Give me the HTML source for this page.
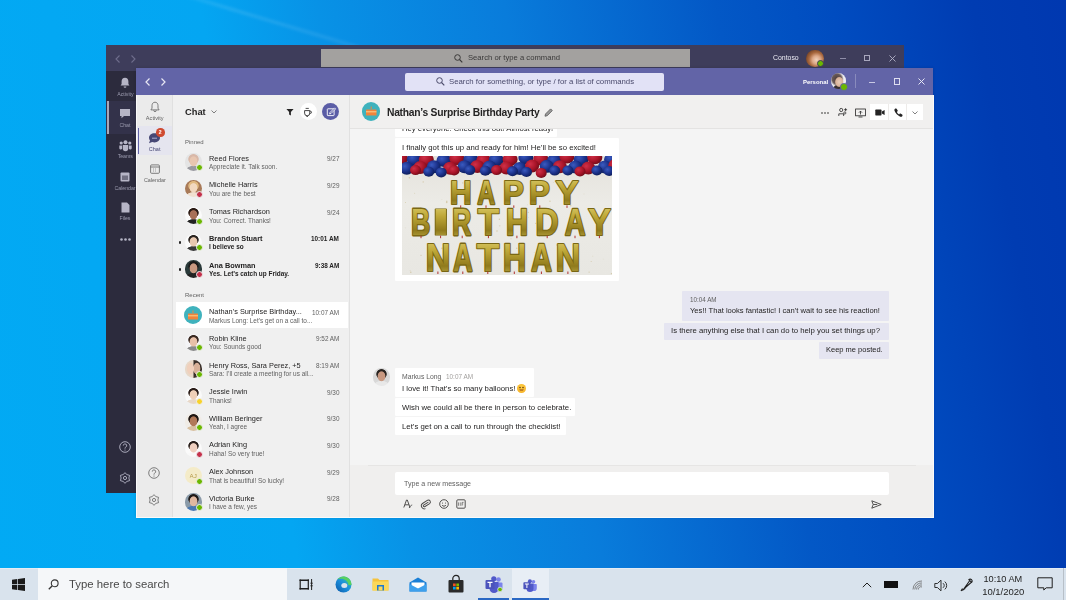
<!DOCTYPE html><html><head><meta charset="utf-8"><style>*{margin:0;padding:0;box-sizing:border-box}
html,body{width:1066px;height:600px;overflow:hidden}
body{position:relative;font-family:"Liberation Sans",sans-serif;background:#0a8de6}
.a{position:absolute}
.t{position:absolute;white-space:nowrap;line-height:1;will-change:transform}
svg{position:absolute;overflow:visible}
.av{position:absolute;border-radius:50%;overflow:hidden}
</style></head><body>
<div class="a" style="left:0.00px;top:0.00px;width:1066.00px;height:600.00px;background:linear-gradient(80deg,#02aaf4 0%,#04a6f2 26%,#0892e6 36%,#097cdb 52%,#0358c6 70%,#004cc0 80%,#003cb2 92%,#0038b0 100%)"></div>
<div class="a" style="left:106px;top:-30px;width:520px;height:3px;transform:rotate(16.7deg);transform-origin:0 0;background:linear-gradient(90deg,rgba(255,255,255,0),rgba(255,255,255,.12) 25%,rgba(255,255,255,.08) 60%,rgba(255,255,255,0));filter:blur(1.5px)"></div>
<div class="a" style="left:106.00px;top:44.50px;width:797.50px;height:448.50px;background:#2c2b3d"></div>
<div class="a" style="left:106.00px;top:44.50px;width:797.50px;height:26.50px;background:#3e3d5b"></div>
<svg style="left:115.00px;top:54.50px" width="6" height="8" viewBox="0 0 6 8"><path d="M4.5 .5 1 4l3.5 3.5" fill="none" stroke="#6f6e8c" stroke-width="1.1"/></svg>
<svg style="left:130.00px;top:54.50px" width="6" height="8" viewBox="0 0 6 8"><path d="M1.5 .5 5 4 1.5 7.5" fill="none" stroke="#6f6e8c" stroke-width="1.1"/></svg>
<div class="a" style="left:321.00px;top:49.00px;width:368.50px;height:17.70px;background:#a3a19f"></div>
<svg style="left:454.00px;top:53.50px" width="9" height="9" viewBox="0 0 9 9"><circle cx="3.5" cy="3.5" r="2.8" fill="none" stroke="#3a3939" stroke-width="1"/><path d="M5.5 5.5 8.3 8.3" stroke="#3a3939" stroke-width="1.1"/></svg>
<div class="t" style="left:468.00px;top:54.35px;font-size:7.66px;color:#3a3939;font-weight:normal;">Search or type a command</div>
<div class="t" style="left:773.20px;top:55.30px;font-size:6.9px;color:#ececf4;font-weight:normal;">Contoso</div>
<div class="av" style="left:806px;top:49.5px;width:17.5px;height:17.5px;background:radial-gradient(circle at 58% 58%,#efd2bc 0,#dca888 28%,#a8683e 52%,#6e3e22 80%,#5a3a2a 100%)"></div>
<div class="a" style="left:817.00px;top:59.50px;width:7.00px;height:7.00px;border-radius:50%;background:#6bb700;border:1px solid #3e3d5b"></div>
<div class="a" style="left:840.00px;top:58.00px;width:6.00px;height:1.00px;background:#8f8ea8"></div>
<div class="a" style="left:864.20px;top:55.00px;width:6.20px;height:6.20px;border:.9px solid #a8a7bd"></div>
<svg style="left:888.60px;top:54.60px" width="7" height="7" viewBox="0 0 7 7"><path d="M.5 .5l6 6M6.5 .5l-6 6" stroke="#b4b3c8" stroke-width=".9"/></svg>
<div class="a" style="left:106.00px;top:100.50px;width:29.50px;height:33.00px;background:#33324a"></div>
<div class="a" style="left:106.50px;top:100.50px;width:2.00px;height:33.00px;background:#a8a8b8"></div>
<svg style="left:120.00px;top:77.00px" width="10" height="11" viewBox="0 0 10 11"><path d="M5 .8C2.8.8 1.6 2.5 1.6 4.6V7L.6 8.6h8.8L8.4 7V4.6C8.4 2.5 7.2.8 5 .8Z" fill="#b6b5c6"/><path d="M3.6 9.4a1.4 1.4 0 0 0 2.8 0" fill="#b6b5c6"/></svg>
<div class="t" style="right:941.00px;top:91.66px;font-size:5.2px;color:#9d9cb0;font-weight:normal;transform:translateX(50%)">Activity</div>
<svg style="left:119.00px;top:107.50px" width="12" height="11" viewBox="0 0 12 11"><path d="M1 1h10v7H5L2.5 10.2V8H1Z" fill="#b6b5c6"/></svg>
<div class="t" style="right:941.00px;top:122.66px;font-size:5.2px;color:#9d9cb0;font-weight:normal;transform:translateX(50%)">Chat</div>
<svg style="left:118.50px;top:139.50px" width="13" height="10" viewBox="0 0 13 10"><circle cx="6.5" cy="2.2" r="2" fill="#b6b5c6"/><circle cx="2.2" cy="3" r="1.6" fill="#b6b5c6"/><circle cx="10.8" cy="3" r="1.6" fill="#b6b5c6"/><path d="M3.8 5h5.4v3.6a2.7 2.7 0 0 1-5.4 0Z" fill="#b6b5c6"/><path d="M.3 5.4h2.8v3.4a1.6 1.6 0 0 1-2.8-.4ZM9.9 5.4h2.8v3a1.6 1.6 0 0 1-2.8.4Z" fill="#b6b5c6"/></svg>
<div class="t" style="right:941.00px;top:153.66px;font-size:5.2px;color:#9d9cb0;font-weight:normal;transform:translateX(50%)">Teams</div>
<svg style="left:120.00px;top:171.50px" width="10" height="10" viewBox="0 0 10 10"><rect x=".5" y=".5" width="9" height="9" rx="1" fill="#b6b5c6"/><rect x="2" y="3.5" width="6" height="4.5" fill="#2c2b3d" opacity=".5"/></svg>
<div class="t" style="right:941.00px;top:185.66px;font-size:5.2px;color:#9d9cb0;font-weight:normal;transform:translateX(50%)">Calendar</div>
<svg style="left:120.50px;top:202.00px" width="9" height="11" viewBox="0 0 9 11"><path d="M.5.5h5.5l2.5 2.5v7.5H.5Z" fill="#b6b5c6"/></svg>
<div class="t" style="right:941.00px;top:216.16px;font-size:5.2px;color:#9d9cb0;font-weight:normal;transform:translateX(50%)">Files</div>
<svg style="left:119.50px;top:237.50px" width="11" height="3" viewBox="0 0 11 3"><circle cx="1.5" cy="1.5" r="1.3" fill="#b6b5c6"/><circle cx="5.5" cy="1.5" r="1.3" fill="#b6b5c6"/><circle cx="9.5" cy="1.5" r="1.3" fill="#b6b5c6"/></svg>
<svg style="left:119.00px;top:440.70px" width="12" height="12" viewBox="0 0 12 12"><circle cx="6" cy="6" r="5.3" fill="none" stroke="#b6b5c6" stroke-width=".9"/><path d="M4.3 4.6a1.7 1.7 0 1 1 2.5 1.5c-.6.3-.8.6-.8 1.2v.4" fill="none" stroke="#b6b5c6" stroke-width=".9"/><circle cx="6" cy="9" r=".6" fill="#b6b5c6"/></svg>
<svg style="left:119.00px;top:472.30px" width="12" height="12" viewBox="0 0 12 12"><path d="M6.00 0.70 L7.95 2.62 L10.59 3.35 L9.90 6.00 L10.59 8.65 L7.95 9.38 L6.00 11.30 L4.05 9.38 L1.41 8.65 L2.10 6.00 L1.41 3.35 L4.05 2.62Z" stroke-linejoin="round" fill="none" stroke="#b6b5c6" stroke-width=".9"/><circle cx="6" cy="6" r="1.6" fill="none" stroke="#b6b5c6" stroke-width=".9"/></svg>
<div class="a" style="left:135.50px;top:68.00px;width:797.50px;height:449.00px;background:#f4f4f4;box-shadow:0 0 3px rgba(0,0,0,.15)"></div>
<div class="a" style="left:135.50px;top:68.00px;width:797.50px;height:27.00px;background:#6264a7"></div>
<svg style="left:144.50px;top:77.70px" width="6" height="8" viewBox="0 0 6 8"><path d="M4.5 .5 1 4l3.5 3.5" fill="none" stroke="#e8e8f4" stroke-width="1.2"/></svg>
<svg style="left:160.00px;top:77.70px" width="6" height="8" viewBox="0 0 6 8"><path d="M1.5 .5 5 4 1.5 7.5" fill="none" stroke="#e8e8f4" stroke-width="1.2"/></svg>
<div class="a" style="left:405.00px;top:73.00px;width:259.20px;height:17.50px;background:#e2e2f6;border-radius:2px"></div>
<svg style="left:435.50px;top:76.80px" width="9" height="9" viewBox="0 0 9 9"><circle cx="3.5" cy="3.5" r="2.8" fill="none" stroke="#4a4a6a" stroke-width="1"/><path d="M5.5 5.5 8.3 8.3" stroke="#4a4a6a" stroke-width="1.1"/></svg>
<div class="t" style="left:449.00px;top:77.99px;font-size:7.8px;color:#4a4a6c;font-weight:normal;">Search for something, or type / for a list of commands</div>
<div class="t" style="left:802.60px;top:79.82px;font-size:5.95px;color:#ffffff;font-weight:bold;">Personal</div>
<div class="av" style="left:830.8px;top:73.4px;width:15.5px;height:15.5px;background:radial-gradient(ellipse 30% 34% at 55% 56%,#e8cbb8 0,#d8b098 80%,transparent 100%),radial-gradient(ellipse 45% 45% at 40% 38%,#4a3a38 0,#6a5a58 70%,transparent 100%),radial-gradient(ellipse 40% 30% at 50% 100%,#3a3030 0,#3a3030 80%,transparent 100%),#eeeef2"></div>
<div class="a" style="left:840.00px;top:83.00px;width:7.50px;height:7.50px;border-radius:50%;background:#6bb700;border:1px solid #6264a7"></div>
<div class="a" style="left:855.00px;top:74.00px;width:1.00px;height:14.00px;background:rgba(255,255,255,.25)"></div>
<div class="a" style="left:869.00px;top:81.60px;width:6.00px;height:0.90px;background:#c8c8e4"></div>
<div class="a" style="left:893.50px;top:78.30px;width:6.50px;height:6.50px;border:.9px solid #dedef0"></div>
<svg style="left:917.60px;top:78.00px" width="7" height="7" viewBox="0 0 7 7"><path d="M.5 .5l6 6M6.5 .5l-6 6" stroke="#ececf8" stroke-width=".95"/></svg>
<div class="a" style="left:135.50px;top:95.00px;width:37.00px;height:422.00px;background:#ebebeb"></div>
<div class="a" style="left:172.00px;top:95.00px;width:1.00px;height:422.00px;background:#e0e0e0"></div>
<svg style="left:149.70px;top:100.80px" width="10" height="11" viewBox="0 0 10 11"><path d="M5 1.2C3 1.2 2 2.8 2 4.6V7.2L.9 8.9h8.2L8 7.2V4.6C8 2.8 7 1.2 5 1.2Z" fill="none" stroke="#616161" stroke-width=".8"/><path d="M3.7 9.3a1.3 1.3 0 0 0 2.6 0" fill="none" stroke="#616161" stroke-width=".8"/></svg>
<div class="t" style="right:911.30px;top:115.68px;font-size:5.6px;color:#616161;font-weight:normal;transform:translateX(50%)">Activity</div>
<div class="a" style="left:136.00px;top:126.00px;width:36.00px;height:28.50px;background:#e5e5ef"></div>
<div class="a" style="left:137.80px;top:128.20px;width:1.50px;height:26.00px;background:#6264a7"></div>
<svg style="left:148.00px;top:132.00px" width="13" height="12" viewBox="0 0 13 12"><path d="M6.5 1.2c3.2 0 5.5 2 5.5 4.6S9.7 10.4 6.5 10.4c-.8 0-1.6-.1-2.3-.4L1 11.2l1-2.6C1.4 7.8 1 6.9 1 5.8 1 3.2 3.3 1.2 6.5 1.2Z" fill="#464775"/><path d="M4 6.2h5" stroke="#c8c8e8" stroke-width=".8"/></svg>
<div class="a" style="left:156.30px;top:128.00px;width:8.50px;height:8.50px;border-radius:50%;background:#cf4a30"></div>
<div class="t" style="right:905.45px;top:129.68px;font-size:5.6px;color:#fff;font-weight:bold;transform:translateX(50%)">2</div>
<div class="t" style="right:911.80px;top:146.53px;font-size:5.5px;color:#464775;font-weight:normal;transform:translateX(50%)">Chat</div>
<svg style="left:149.50px;top:163.50px" width="10" height="10" viewBox="0 0 10 10"><rect x=".6" y=".9" width="8.8" height="8.4" rx="1" fill="none" stroke="#616161" stroke-width=".8"/><path d="M.6 3h8.8" stroke="#616161" stroke-width=".8"/><path d="M3 5h.8M5 5h.8M3 7h.8M5 7h.8" stroke="#616161" stroke-width=".7"/></svg>
<div class="t" style="right:911.50px;top:178.07px;font-size:5.4px;color:#616161;font-weight:normal;transform:translateX(50%)">Calendar</div>
<svg style="left:148.20px;top:467.30px" width="12" height="12" viewBox="0 0 12 12"><circle cx="6" cy="6" r="5.3" fill="none" stroke="#616161" stroke-width=".8"/><path d="M4.3 4.6a1.7 1.7 0 1 1 2.5 1.5c-.6.3-.8.6-.8 1.2v.4" fill="none" stroke="#616161" stroke-width=".8"/><circle cx="6" cy="9" r=".55" fill="#616161"/></svg>
<svg style="left:148.20px;top:494.00px" width="12" height="12" viewBox="0 0 12 12"><path d="M6.00 0.70 L7.95 2.62 L10.59 3.35 L9.90 6.00 L10.59 8.65 L7.95 9.38 L6.00 11.30 L4.05 9.38 L1.41 8.65 L2.10 6.00 L1.41 3.35 L4.05 2.62Z" stroke-linejoin="round" fill="none" stroke="#616161" stroke-width=".8"/><circle cx="6" cy="6" r="1.6" fill="none" stroke="#616161" stroke-width=".8"/></svg>
<div class="a" style="left:173.00px;top:95.00px;width:176.00px;height:422.00px;background:#f0f0f0"></div>
<div class="a" style="left:348.50px;top:95.00px;width:1.00px;height:422.00px;background:#e1e1e1"></div>
<div class="t" style="left:184.70px;top:108.22px;font-size:9.3px;color:#252424;font-weight:bold;">Chat</div>
<svg style="left:210.50px;top:109.80px" width="6" height="4" viewBox="0 0 6 4"><path d="M.5.5 3 3 5.5.5" fill="none" stroke="#616161" stroke-width=".8"/></svg>
<svg style="left:286.30px;top:108.00px" width="8" height="8" viewBox="0 0 8 8"><path d="M.4.9h7.2L4.9 4.1v3.3L3.1 6.5V4.1Z" fill="#252424"/></svg>
<div class="a" style="left:299.80px;top:103.40px;width:17.00px;height:17.00px;border-radius:50%;background:#fff"></div>
<svg style="left:303.30px;top:106.50px" width="10" height="10" viewBox="0 0 10 10"><path d="M1.6 3.6h5.2v2.6a2.6 2.6 0 0 1-5.2 0Z" fill="none" stroke="#252424" stroke-width=".85"/><path d="M6.8 4.2h.6a1.1 1.1 0 0 1 0 2.2h-.8" fill="none" stroke="#252424" stroke-width=".8"/><path d="M2.6 1.4h3.2M3.4 9.4h1.6" stroke="#252424" stroke-width=".8"/></svg>
<div class="a" style="left:321.70px;top:102.80px;width:17.70px;height:17.70px;border-radius:50%;background:#5b5da6"></div>
<svg style="left:325.60px;top:106.60px" width="10" height="10" viewBox="0 0 10 10"><rect x="1.3" y="1.8" width="6.8" height="6.8" rx=".6" fill="none" stroke="#fff" stroke-width=".9"/><path d="M8.6.9 4 5.5 3.6 6.9 5 6.5 9.6 1.9Z" fill="#5b5da6" stroke="#fff" stroke-width=".85" stroke-linejoin="round"/></svg>
<div class="t" style="left:184.70px;top:139.10px;font-size:6px;color:#616161;font-weight:normal;">Pinned</div>
<div class="av" style="left:184.60px;top:153.30px;width:17.40px;height:17.40px;background:radial-gradient(ellipse 25% 30% at 50% 46%,#e8c6b0 0,#e8c6b0 82%,transparent 100%),radial-gradient(ellipse 33% 30% at 50% 34%,#d8b8a8 0,#d8b8a8 85%,transparent 100%),radial-gradient(ellipse 48% 30% at 50% 100%,#9a9aa0 0,#9a9aa0 88%,transparent 100%),#e4e4e4"></div>
<div class="a" style="left:195.50px;top:164.20px;width:7.00px;height:7.00px;border-radius:50%;background:#6bb700;border:1px solid #f0f0f0"></div>
<div class="t" style="left:209.00px;top:154.69px;font-size:7.35px;color:#252424;font-weight:normal;">Reed Flores</div>
<div class="t" style="left:209.00px;top:164.20px;font-size:6.45px;color:#616161;font-weight:normal;">Appreciate it. Talk soon.</div>
<div class="t" style="right:727.00px;top:156.22px;font-size:6.4px;color:#616161;font-weight:normal;">9/27</div>
<div class="av" style="left:184.60px;top:180.05px;width:17.40px;height:17.40px;background:radial-gradient(ellipse 25% 30% at 50% 46%,#f2d8c0 0,#f2d8c0 82%,transparent 100%),radial-gradient(ellipse 33% 30% at 50% 34%,#e0b880 0,#e0b880 85%,transparent 100%),radial-gradient(ellipse 48% 30% at 50% 100%,#f0e0d0 0,#f0e0d0 88%,transparent 100%),#a87a58"></div>
<div class="a" style="left:195.50px;top:190.95px;width:7.00px;height:7.00px;border-radius:50%;background:#c4314b;border:1px solid #f0f0f0"></div>
<div class="t" style="left:209.00px;top:181.44px;font-size:7.35px;color:#252424;font-weight:normal;">Michelle Harris</div>
<div class="t" style="left:209.00px;top:190.95px;font-size:6.45px;color:#616161;font-weight:normal;">You are the best</div>
<div class="t" style="right:727.00px;top:182.97px;font-size:6.4px;color:#616161;font-weight:normal;">9/29</div>
<div class="av" style="left:184.60px;top:206.80px;width:17.40px;height:17.40px;background:radial-gradient(ellipse 25% 30% at 50% 46%,#a87058 0,#a87058 82%,transparent 100%),radial-gradient(ellipse 33% 30% at 50% 34%,#2a1a14 0,#2a1a14 85%,transparent 100%),radial-gradient(ellipse 48% 30% at 50% 100%,#222 0,#222 88%,transparent 100%),#fbfbfb"></div>
<div class="a" style="left:195.50px;top:217.70px;width:7.00px;height:7.00px;border-radius:50%;background:#6bb700;border:1px solid #f0f0f0"></div>
<div class="t" style="left:209.00px;top:208.19px;font-size:7.35px;color:#252424;font-weight:normal;">Tomas Richardson</div>
<div class="t" style="left:209.00px;top:217.70px;font-size:6.45px;color:#616161;font-weight:normal;">You: Correct. Thanks!</div>
<div class="t" style="right:727.00px;top:209.72px;font-size:6.4px;color:#616161;font-weight:normal;">9/24</div>
<div class="av" style="left:184.60px;top:233.55px;width:17.40px;height:17.40px;background:radial-gradient(ellipse 25% 30% at 50% 46%,#e8c8b0 0,#e8c8b0 82%,transparent 100%),radial-gradient(ellipse 33% 30% at 50% 34%,#2a2420 0,#2a2420 85%,transparent 100%),radial-gradient(ellipse 48% 30% at 50% 100%,#3a3a3a 0,#3a3a3a 88%,transparent 100%),#fbfbfb"></div>
<div class="a" style="left:195.50px;top:244.45px;width:7.00px;height:7.00px;border-radius:50%;background:#6bb700;border:1px solid #f0f0f0"></div>
<div class="t" style="left:209.00px;top:234.94px;font-size:7.35px;color:#252424;font-weight:bold;">Brandon Stuart</div>
<div class="t" style="left:209.00px;top:244.45px;font-size:6.45px;color:#252424;font-weight:bold;">I believe so</div>
<div class="t" style="right:727.00px;top:236.47px;font-size:6.4px;color:#252424;font-weight:bold;">10:01 AM</div>
<div class="a" style="left:178.80px;top:241.45px;width:2.60px;height:2.60px;border-radius:50%;background:#252424"></div>
<div class="av" style="left:184.60px;top:260.30px;width:17.40px;height:17.40px;background:radial-gradient(ellipse 25% 30% at 50% 46%,#c89880 0,#c89880 82%,transparent 100%),radial-gradient(ellipse 33% 30% at 50% 34%,#1a1a1a 0,#1a1a1a 85%,transparent 100%),radial-gradient(ellipse 48% 30% at 50% 100%,#222 0,#222 88%,transparent 100%),#2a3a3a"></div>
<div class="a" style="left:195.50px;top:271.20px;width:7.00px;height:7.00px;border-radius:50%;background:#c4314b;border:1px solid #f0f0f0"></div>
<div class="t" style="left:209.00px;top:261.69px;font-size:7.35px;color:#252424;font-weight:bold;">Ana Bowman</div>
<div class="t" style="left:209.00px;top:271.20px;font-size:6.45px;color:#252424;font-weight:bold;">Yes. Let’s catch up Friday.</div>
<div class="t" style="right:727.00px;top:263.22px;font-size:6.4px;color:#252424;font-weight:bold;">9:38 AM</div>
<div class="a" style="left:178.80px;top:268.20px;width:2.60px;height:2.60px;border-radius:50%;background:#252424"></div>
<div class="t" style="left:184.70px;top:291.90px;font-size:6px;color:#616161;font-weight:normal;">Recent</div>
<div class="a" style="left:175.80px;top:302.00px;width:172.00px;height:26.20px;background:#fff"></div>
<div class="av" style="left:184.20px;top:306.00px;width:18.20px;height:18.20px;background:#3fb2bd"></div>
<svg style="left:187.30px;top:310.10px" width="12" height="10" viewBox="0 0 12 10"><rect x="1" y="3.5" width="10" height="6" rx=".6" fill="#f0843c"/><rect x="1" y="5.3" width="10" height="1" fill="#fbd38a"/><path d="M6 .5v2.5" stroke="#f0843c" stroke-width="1"/></svg>
<div class="t" style="left:209.00px;top:308.29px;font-size:7.35px;color:#252424;font-weight:normal;">Nathan’s Surprise Birthday...</div>
<div class="t" style="left:209.00px;top:317.80px;font-size:6.45px;color:#616161;font-weight:normal;">Markus Long: Let’s get on a call to...</div>
<div class="t" style="right:727.00px;top:309.82px;font-size:6.4px;color:#616161;font-weight:normal;">10:07 AM</div>
<div class="av" style="left:184.60px;top:333.53px;width:17.40px;height:17.40px;background:radial-gradient(ellipse 25% 30% at 50% 46%,#e8c0a8 0,#e8c0a8 82%,transparent 100%),radial-gradient(ellipse 33% 30% at 50% 34%,#3a2a22 0,#3a2a22 85%,transparent 100%),radial-gradient(ellipse 48% 30% at 50% 100%,#8a8a8a 0,#8a8a8a 88%,transparent 100%),#f4f4f6"></div>
<div class="a" style="left:195.50px;top:344.43px;width:7.00px;height:7.00px;border-radius:50%;background:#6bb700;border:1px solid #f0f0f0"></div>
<div class="t" style="left:209.00px;top:334.92px;font-size:7.35px;color:#252424;font-weight:normal;">Robin Kline</div>
<div class="t" style="left:209.00px;top:344.43px;font-size:6.45px;color:#616161;font-weight:normal;">You: Sounds good</div>
<div class="t" style="right:727.00px;top:336.45px;font-size:6.4px;color:#616161;font-weight:normal;">9:52 AM</div>
<div class="av" style="left:184.60px;top:360.16px;width:17.40px;height:17.40px;background:radial-gradient(ellipse 22% 35% at 32% 48%,#f0d0bc 0,#f0d0bc 85%,transparent 100%),radial-gradient(ellipse 22% 35% at 70% 48%,#d8b098 0,#d8b098 85%,transparent 100%),linear-gradient(90deg,#e8d8c8 0,#e8d8c8 48%,#3a302a 52%,#3a302a 100%)"></div>
<div class="a" style="left:195.50px;top:371.06px;width:7.00px;height:7.00px;border-radius:50%;background:#6bb700;border:1px solid #f0f0f0"></div>
<div class="t" style="left:209.00px;top:361.55px;font-size:7.35px;color:#252424;font-weight:normal;">Henry Ross, Sara Perez, +5</div>
<div class="t" style="left:209.00px;top:371.06px;font-size:6.45px;color:#616161;font-weight:normal;">Sara: I’ll create a meeting for us all...</div>
<div class="t" style="right:727.00px;top:363.08px;font-size:6.4px;color:#616161;font-weight:normal;">8:19 AM</div>
<div class="av" style="left:184.60px;top:386.79px;width:17.40px;height:17.40px;background:radial-gradient(ellipse 25% 30% at 50% 46%,#f0d0b8 0,#f0d0b8 82%,transparent 100%),radial-gradient(ellipse 33% 30% at 50% 34%,#2a1c18 0,#2a1c18 85%,transparent 100%),radial-gradient(ellipse 48% 30% at 50% 100%,#e8d8c8 0,#e8d8c8 88%,transparent 100%),#fafafa"></div>
<div class="a" style="left:195.50px;top:397.69px;width:7.00px;height:7.00px;border-radius:50%;background:#f8d22a;border:1px solid #f0f0f0"></div>
<div class="t" style="left:209.00px;top:388.18px;font-size:7.35px;color:#252424;font-weight:normal;">Jessie Irwin</div>
<div class="t" style="left:209.00px;top:397.69px;font-size:6.45px;color:#616161;font-weight:normal;">Thanks!</div>
<div class="t" style="right:727.00px;top:389.71px;font-size:6.4px;color:#616161;font-weight:normal;">9/30</div>
<div class="av" style="left:184.60px;top:413.42px;width:17.40px;height:17.40px;background:radial-gradient(ellipse 25% 30% at 50% 46%,#b07858 0,#b07858 82%,transparent 100%),radial-gradient(ellipse 33% 30% at 50% 34%,#1e1612 0,#1e1612 85%,transparent 100%),radial-gradient(ellipse 48% 30% at 50% 100%,#d8c0a0 0,#d8c0a0 88%,transparent 100%),#f0ece6"></div>
<div class="a" style="left:195.50px;top:424.32px;width:7.00px;height:7.00px;border-radius:50%;background:#6bb700;border:1px solid #f0f0f0"></div>
<div class="t" style="left:209.00px;top:414.81px;font-size:7.35px;color:#252424;font-weight:normal;">William Beringer</div>
<div class="t" style="left:209.00px;top:424.32px;font-size:6.45px;color:#616161;font-weight:normal;">Yeah, I agree</div>
<div class="t" style="right:727.00px;top:416.34px;font-size:6.4px;color:#616161;font-weight:normal;">9/30</div>
<div class="av" style="left:184.60px;top:440.05px;width:17.40px;height:17.40px;background:radial-gradient(ellipse 25% 30% at 50% 46%,#f0d0c0 0,#f0d0c0 82%,transparent 100%),radial-gradient(ellipse 33% 30% at 50% 34%,#2a201c 0,#2a201c 85%,transparent 100%),radial-gradient(ellipse 48% 30% at 50% 100%,#f8f8f8 0,#f8f8f8 88%,transparent 100%),#fafafa"></div>
<div class="a" style="left:195.50px;top:450.95px;width:7.00px;height:7.00px;border-radius:50%;background:#c4314b;border:1px solid #f0f0f0"></div>
<div class="t" style="left:209.00px;top:441.44px;font-size:7.35px;color:#252424;font-weight:normal;">Adrian King</div>
<div class="t" style="left:209.00px;top:450.95px;font-size:6.45px;color:#616161;font-weight:normal;">Haha! So very true!</div>
<div class="t" style="right:727.00px;top:442.97px;font-size:6.4px;color:#616161;font-weight:normal;">9/30</div>
<div class="av" style="left:184.60px;top:466.68px;width:17.40px;height:17.40px;background:#f4ebc8"></div>
<div class="a" style="left:195.50px;top:477.58px;width:7.00px;height:7.00px;border-radius:50%;background:#6bb700;border:1px solid #f0f0f0"></div>
<div class="t" style="right:872.70px;top:472.59px;font-size:6.2px;color:#b59a4a;font-weight:normal;transform:translateX(50%)">AJ</div>
<div class="t" style="left:209.00px;top:468.07px;font-size:7.35px;color:#252424;font-weight:normal;">Alex Johnson</div>
<div class="t" style="left:209.00px;top:477.58px;font-size:6.45px;color:#616161;font-weight:normal;">That is beautiful! So lucky!</div>
<div class="t" style="right:727.00px;top:469.60px;font-size:6.4px;color:#616161;font-weight:normal;">9/29</div>
<div class="av" style="left:184.60px;top:493.31px;width:17.40px;height:17.40px;background:radial-gradient(ellipse 25% 30% at 50% 46%,#e0b8a0 0,#e0b8a0 82%,transparent 100%),radial-gradient(ellipse 33% 30% at 50% 34%,#1e1a18 0,#1e1a18 85%,transparent 100%),radial-gradient(ellipse 48% 30% at 50% 100%,#4a78b0 0,#4a78b0 88%,transparent 100%),#8a9aa8"></div>
<div class="a" style="left:195.50px;top:504.21px;width:7.00px;height:7.00px;border-radius:50%;background:#6bb700;border:1px solid #f0f0f0"></div>
<div class="t" style="left:209.00px;top:494.70px;font-size:7.35px;color:#252424;font-weight:normal;">Victoria Burke</div>
<div class="t" style="left:209.00px;top:504.21px;font-size:6.45px;color:#616161;font-weight:normal;">I have a few, yes</div>
<div class="t" style="right:727.00px;top:496.23px;font-size:6.4px;color:#616161;font-weight:normal;">9/28</div>
<div class="a" style="left:349.50px;top:95.00px;width:583.50px;height:33.00px;background:#f1f0ef"></div>
<div class="a" style="left:349.50px;top:128.00px;width:583.50px;height:1.00px;background:#e4e3e2"></div>
<div class="a" style="left:349.50px;top:129.00px;width:583.50px;height:388.00px;background:#f4f4f4"></div>
<div class="av" style="left:361.80px;top:102.10px;width:18.60px;height:18.60px;background:#3fb2bd"></div>
<svg style="left:365.00px;top:106.30px" width="12.5" height="10" viewBox="0 0 12.5 10"><rect x="1" y="3.5" width="10.5" height="6" rx=".6" fill="#f0843c"/><rect x="1" y="5.3" width="10.5" height="1" fill="#fbd38a"/><path d="M6.2 .5v2.5" stroke="#f0843c" stroke-width="1"/></svg>
<div class="t" style="left:386.70px;top:107.56px;font-size:10.3px;color:#252424;font-weight:bold;letter-spacing:-.27px">Nathan’s Surprise Birthday Party</div>
<svg style="left:543.80px;top:107.60px" width="9" height="9" viewBox="0 0 9 9"><path d="M1 8.2l.5-2.2L6.6 .9 8.3 2.6 3.2 7.7Z" fill="#9a9a9a" stroke="#616161" stroke-width=".9" stroke-linejoin="round"/></svg>
<svg style="left:820.50px;top:111.50px" width="8" height="2" viewBox="0 0 8 2"><circle cx="1" cy="1" r=".8" fill="#252424"/><circle cx="4" cy="1" r=".8" fill="#252424"/><circle cx="7" cy="1" r=".8" fill="#252424"/></svg>
<svg style="left:837.50px;top:107.00px" width="10" height="11" viewBox="0 0 10 11"><circle cx="3.2" cy="3" r="1.6" fill="none" stroke="#252424" stroke-width=".8"/><path d="M.8 9V6.8h4.8V9" fill="none" stroke="#252424" stroke-width=".8"/><path d="M7.6 1.2v3M6.1 2.7h3" stroke="#252424" stroke-width=".8"/><circle cx="6.8" cy="6" r="1.1" fill="none" stroke="#252424" stroke-width=".7"/></svg>
<svg style="left:854.80px;top:107.50px" width="11" height="10" viewBox="0 0 11 10"><rect x=".6" y="1" width="9.8" height="6.8" fill="none" stroke="#252424" stroke-width=".8"/><path d="M5.5 6.5V3.2M4 4.6 5.5 3.1 7 4.6M3.5 9h4" fill="none" stroke="#252424" stroke-width=".8"/></svg>
<div class="a" style="left:869.80px;top:104.00px;width:53.20px;height:15.80px;background:#fff"></div>
<div class="a" style="left:888.30px;top:104.00px;width:0.70px;height:15.80px;background:#edebe9"></div>
<div class="a" style="left:906.30px;top:104.00px;width:0.70px;height:15.80px;background:#edebe9"></div>
<svg style="left:874.80px;top:108.50px" width="10" height="7" viewBox="0 0 10 7"><rect x=".3" y=".6" width="6.2" height="5.8" rx=".6" fill="#252424"/><path d="M6.8 2.6 9.6 .9v5.2L6.8 4.4Z" fill="#252424"/></svg>
<svg style="left:893.50px;top:107.70px" width="8" height="8" viewBox="0 0 8 8"><path d="M1.3.6c.5-.3 1.1-.1 1.4.3l.9 1.3c.3.5.2 1.1-.3 1.4l-.4.3c.4 1 1.3 2 2.3 2.5l.3-.4c.3-.5.9-.6 1.4-.3l1.2.8c.5.3.6.9.3 1.4-.5.8-1.4 1.1-2.2.8C3.7 7.6 1.4 5.3.5 2.8.2 1.9.5 1 1.3.6Z" fill="#252424"/></svg>
<svg style="left:912.30px;top:110.70px" width="6" height="4" viewBox="0 0 6 4"><path d="M.5.5 3 3 5.5.5" fill="none" stroke="#616161" stroke-width=".8"/></svg>
<div class="a" style="left:349.5px;top:128.5px;width:583.5px;height:336px;overflow:hidden">
<div class="a" style="left:45.50px;top:-13.50px;width:161.50px;height:22.00px;background:#fff;border-radius:1px"></div>
<div class="t" style="left:52.50px;top:-3.37px;font-size:7.7px;color:#252424;font-weight:normal;">Hey everyone. Check this out! Almost ready!</div>
<div class="a" style="left:45.30px;top:9.90px;width:224.00px;height:142.30px;background:#fff;border-radius:1px"></div>
<div class="t" style="left:52.50px;top:15.41px;font-size:7.75px;color:#252424;font-weight:normal;">I finally got this up and ready for him! He’ll be so excited!</div>
<div class="a" style="left:52.5px;top:27.400000000000006px;width:210px;height:119.4px;overflow:hidden;background:linear-gradient(180deg,#e4e2dc 0,#ecebe6 40%,#e8e7e2 100%)">
<svg style="left:0;top:0" width="210" height="120" viewBox="0 0 210 120"><defs><radialGradient id="br" cx=".35" cy=".35" r=".7"><stop offset="0" stop-color="#d03048"/><stop offset=".6" stop-color="#a81428"/><stop offset="1" stop-color="#700c18"/></radialGradient><radialGradient id="bb" cx=".35" cy=".35" r=".7"><stop offset="0" stop-color="#3a5ac0"/><stop offset=".6" stop-color="#1a3088"/><stop offset="1" stop-color="#0e1e58"/></radialGradient><linearGradient id="gold" x1="0" y1="0" x2="0" y2="1"><stop offset="0" stop-color="#e2d478"/><stop offset=".35" stop-color="#bfa838"/><stop offset=".7" stop-color="#907a1c"/><stop offset="1" stop-color="#c8b852"/></linearGradient></defs><circle cx="95.0" cy="74.9" r="0.76" fill="#c8b888" opacity=".6"/><circle cx="97.8" cy="69.8" r="0.59" fill="#c8b888" opacity=".6"/><circle cx="38.8" cy="70.2" r="0.61" fill="#c8b888" opacity=".6"/><circle cx="166.5" cy="29.2" r="0.45" fill="#c8b888" opacity=".6"/><circle cx="19.0" cy="99.3" r="0.65" fill="#c8b888" opacity=".6"/><circle cx="8.8" cy="116.3" r="0.78" fill="#c8b888" opacity=".6"/><circle cx="137.3" cy="80.3" r="0.38" fill="#c8b888" opacity=".6"/><circle cx="3.2" cy="71.8" r="0.33" fill="#c8b888" opacity=".6"/><circle cx="39.9" cy="43.7" r="0.32" fill="#c8b888" opacity=".6"/><circle cx="97.4" cy="63.2" r="0.72" fill="#c8b888" opacity=".6"/><circle cx="109.0" cy="82.7" r="0.55" fill="#c8b888" opacity=".6"/><circle cx="139.1" cy="64.8" r="0.44" fill="#c8b888" opacity=".6"/><circle cx="209.5" cy="117.6" r="0.72" fill="#c8b888" opacity=".6"/><circle cx="148.6" cy="50.9" r="0.41" fill="#c8b888" opacity=".6"/><circle cx="60.7" cy="26.9" r="0.68" fill="#c8b888" opacity=".6"/><circle cx="84.1" cy="103.0" r="0.49" fill="#c8b888" opacity=".6"/><circle cx="201.2" cy="103.0" r="0.30" fill="#c8b888" opacity=".6"/><circle cx="44.0" cy="109.2" r="0.53" fill="#c8b888" opacity=".6"/><circle cx="205.9" cy="58.9" r="0.34" fill="#c8b888" opacity=".6"/><circle cx="132.2" cy="96.3" r="0.43" fill="#c8b888" opacity=".6"/><circle cx="18.3" cy="52.6" r="0.78" fill="#c8b888" opacity=".6"/><circle cx="159.2" cy="31.6" r="0.42" fill="#c8b888" opacity=".6"/><circle cx="21.2" cy="25.9" r="0.70" fill="#c8b888" opacity=".6"/><circle cx="37.3" cy="74.8" r="0.52" fill="#c8b888" opacity=".6"/><circle cx="40.0" cy="91.7" r="0.37" fill="#c8b888" opacity=".6"/><circle cx="135.2" cy="31.4" r="0.51" fill="#c8b888" opacity=".6"/><circle cx="44.7" cy="46.4" r="0.79" fill="#c8b888" opacity=".6"/><circle cx="168.7" cy="49.8" r="0.74" fill="#c8b888" opacity=".6"/><circle cx="44.2" cy="58.6" r="0.73" fill="#c8b888" opacity=".6"/><circle cx="134.8" cy="29.8" r="0.79" fill="#c8b888" opacity=".6"/><circle cx="44.8" cy="45.3" r="0.69" fill="#c8b888" opacity=".6"/><circle cx="69.1" cy="49.0" r="0.34" fill="#c8b888" opacity=".6"/><circle cx="18.9" cy="77.1" r="0.42" fill="#c8b888" opacity=".6"/><circle cx="126.3" cy="56.4" r="0.53" fill="#c8b888" opacity=".6"/><circle cx="201.4" cy="67.4" r="0.59" fill="#c8b888" opacity=".6"/><circle cx="182.0" cy="37.9" r="0.38" fill="#c8b888" opacity=".6"/><circle cx="190.8" cy="100.1" r="0.42" fill="#c8b888" opacity=".6"/><circle cx="39.9" cy="92.5" r="0.77" fill="#c8b888" opacity=".6"/><circle cx="41.3" cy="113.1" r="0.74" fill="#c8b888" opacity=".6"/><circle cx="126.7" cy="61.3" r="0.35" fill="#c8b888" opacity=".6"/><circle cx="8.1" cy="114.3" r="0.42" fill="#c8b888" opacity=".6"/><circle cx="148.0" cy="45.2" r="0.71" fill="#c8b888" opacity=".6"/><circle cx="125.3" cy="48.8" r="0.39" fill="#c8b888" opacity=".6"/><circle cx="151.3" cy="26.7" r="0.41" fill="#c8b888" opacity=".6"/><circle cx="117.5" cy="103.5" r="0.61" fill="#c8b888" opacity=".6"/><circle cx="58.8" cy="109.9" r="0.40" fill="#c8b888" opacity=".6"/><circle cx="3.5" cy="46.4" r="0.52" fill="#c8b888" opacity=".6"/><circle cx="12.7" cy="37.3" r="0.48" fill="#c8b888" opacity=".6"/><circle cx="120.2" cy="32.9" r="0.48" fill="#c8b888" opacity=".6"/><circle cx="187.1" cy="116.1" r="0.63" fill="#c8b888" opacity=".6"/><circle cx="145.2" cy="77.3" r="0.37" fill="#c8b888" opacity=".6"/><circle cx="7.4" cy="21.8" r="0.76" fill="#c8b888" opacity=".6"/><circle cx="147.2" cy="114.4" r="0.31" fill="#c8b888" opacity=".6"/><circle cx="133.6" cy="67.3" r="0.67" fill="#c8b888" opacity=".6"/><circle cx="67.0" cy="117.9" r="0.34" fill="#c8b888" opacity=".6"/><circle cx="114.7" cy="92.2" r="0.75" fill="#c8b888" opacity=".6"/><circle cx="154.8" cy="89.0" r="0.70" fill="#c8b888" opacity=".6"/><circle cx="192.2" cy="54.5" r="0.64" fill="#c8b888" opacity=".6"/><circle cx="189.2" cy="105.4" r="0.51" fill="#c8b888" opacity=".6"/><circle cx="166.0" cy="104.6" r="0.59" fill="#c8b888" opacity=".6"/><ellipse cx="-1.5" cy="2.5" rx="7.5" ry="6.5" fill="url(#br)"/><ellipse cx="12.3" cy="3.4" rx="7.5" ry="6.5" fill="url(#bb)"/><ellipse cx="24.3" cy="3.6" rx="7.5" ry="6.5" fill="url(#br)"/><ellipse cx="42.0" cy="4.5" rx="7.5" ry="6.5" fill="url(#bb)"/><ellipse cx="54.9" cy="2.6" rx="7.5" ry="6.5" fill="url(#br)"/><ellipse cx="68.9" cy="3.3" rx="7.5" ry="6.5" fill="url(#bb)"/><ellipse cx="81.8" cy="4.4" rx="7.5" ry="6.5" fill="url(#br)"/><ellipse cx="94.3" cy="4.0" rx="7.5" ry="6.5" fill="url(#bb)"/><ellipse cx="108.1" cy="3.4" rx="7.5" ry="6.5" fill="url(#br)"/><ellipse cx="123.9" cy="1.9" rx="7.5" ry="6.5" fill="url(#bb)"/><ellipse cx="138.8" cy="3.0" rx="7.5" ry="6.5" fill="url(#br)"/><ellipse cx="152.5" cy="4.7" rx="7.5" ry="6.5" fill="url(#bb)"/><ellipse cx="165.0" cy="1.0" rx="7.5" ry="6.5" fill="url(#br)"/><ellipse cx="179.2" cy="3.7" rx="7.5" ry="6.5" fill="url(#bb)"/><ellipse cx="192.8" cy="1.7" rx="7.5" ry="6.5" fill="url(#br)"/><ellipse cx="209.6" cy="3.6" rx="7.5" ry="6.5" fill="url(#bb)"/><ellipse cx="4.8" cy="12.2" rx="7" ry="6.5" fill="url(#bb)"/><ellipse cx="18.3" cy="11.5" rx="7" ry="6.5" fill="url(#br)"/><ellipse cx="31.8" cy="10.8" rx="7" ry="6.5" fill="url(#bb)"/><ellipse cx="48.2" cy="12.2" rx="7" ry="6.5" fill="url(#br)"/><ellipse cx="62.5" cy="10.7" rx="7" ry="6.5" fill="url(#bb)"/><ellipse cx="75.3" cy="10.4" rx="7" ry="6.5" fill="url(#br)"/><ellipse cx="87.5" cy="11.0" rx="7" ry="6.5" fill="url(#bb)"/><ellipse cx="104.3" cy="12.0" rx="7" ry="6.5" fill="url(#br)"/><ellipse cx="117.8" cy="12.4" rx="7" ry="6.5" fill="url(#bb)"/><ellipse cx="130.1" cy="10.0" rx="7" ry="6.5" fill="url(#br)"/><ellipse cx="144.8" cy="10.3" rx="7" ry="6.5" fill="url(#bb)"/><ellipse cx="157.9" cy="10.7" rx="7" ry="6.5" fill="url(#br)"/><ellipse cx="173.5" cy="11.0" rx="7" ry="6.5" fill="url(#bb)"/><ellipse cx="186.3" cy="12.0" rx="7" ry="6.5" fill="url(#br)"/><ellipse cx="202.9" cy="10.9" rx="7" ry="6.5" fill="url(#bb)"/><ellipse cx="213.3" cy="9.6" rx="7" ry="6.5" fill="url(#br)"/><ellipse cx="13.5" cy="14.1" rx="5.5" ry="5" fill="url(#br)"/><ellipse cx="26.8" cy="15.7" rx="5.5" ry="5" fill="url(#bb)"/><ellipse cx="39.2" cy="16.4" rx="5.5" ry="5" fill="url(#bb)"/><ellipse cx="52.1" cy="14.4" rx="5.5" ry="5" fill="url(#br)"/><ellipse cx="67.8" cy="14.1" rx="5.5" ry="5" fill="url(#bb)"/><ellipse cx="83.3" cy="14.7" rx="5.5" ry="5" fill="url(#bb)"/><ellipse cx="94.6" cy="14.1" rx="5.5" ry="5" fill="url(#br)"/><ellipse cx="110.5" cy="15.3" rx="5.5" ry="5" fill="url(#bb)"/><ellipse cx="124.5" cy="16.0" rx="5.5" ry="5" fill="url(#bb)"/><ellipse cx="139.2" cy="16.9" rx="5.5" ry="5" fill="url(#br)"/><ellipse cx="152.7" cy="14.6" rx="5.5" ry="5" fill="url(#bb)"/><ellipse cx="165.9" cy="14.5" rx="5.5" ry="5" fill="url(#bb)"/><ellipse cx="178.0" cy="15.4" rx="5.5" ry="5" fill="url(#br)"/><ellipse cx="194.9" cy="14.5" rx="5.5" ry="5" fill="url(#bb)"/><ellipse cx="207.1" cy="15.0" rx="5.5" ry="5" fill="url(#bb)"/><g transform="translate(58.88 48.40) scale(0.900 1)"><text x="0" y="0" text-anchor="middle" font-family="Liberation Sans" font-weight="bold" font-size="33.33" fill="url(#gold)" stroke="#7a6814" stroke-width="2.22" stroke-linejoin="round" paint-order="stroke">H</text></g><path d="M58.7 49.4v2.5" stroke="#b03030" stroke-width="1"/><g transform="translate(84.15 48.40) scale(0.727 1)"><text x="0" y="0" text-anchor="middle" font-family="Liberation Sans" font-weight="bold" font-size="33.33" fill="url(#gold)" stroke="#7a6814" stroke-width="2.75" stroke-linejoin="round" paint-order="stroke">A</text></g><path d="M84.0 49.4v2.5" stroke="#b03030" stroke-width="1"/><g transform="translate(111.39 48.40) scale(0.937 1)"><text x="0" y="0" text-anchor="middle" font-family="Liberation Sans" font-weight="bold" font-size="33.33" fill="url(#gold)" stroke="#7a6814" stroke-width="2.13" stroke-linejoin="round" paint-order="stroke">P</text></g><path d="M111.8 49.4v2.5" stroke="#b03030" stroke-width="1"/><g transform="translate(137.39 48.40) scale(0.937 1)"><text x="0" y="0" text-anchor="middle" font-family="Liberation Sans" font-weight="bold" font-size="33.33" fill="url(#gold)" stroke="#7a6814" stroke-width="2.13" stroke-linejoin="round" paint-order="stroke">P</text></g><path d="M137.8 49.4v2.5" stroke="#b03030" stroke-width="1"/><g transform="translate(165.12 48.40) scale(1.048 1)"><text x="0" y="0" text-anchor="middle" font-family="Liberation Sans" font-weight="bold" font-size="33.33" fill="url(#gold)" stroke="#7a6814" stroke-width="1.91" stroke-linejoin="round" paint-order="stroke">Y</text></g><path d="M165.0 49.4v2.5" stroke="#b03030" stroke-width="1"/><g transform="translate(18.76 78.70) scale(0.721 1)"><text x="0" y="0" text-anchor="middle" font-family="Liberation Sans" font-weight="bold" font-size="36.38" fill="url(#gold)" stroke="#7a6814" stroke-width="2.77" stroke-linejoin="round" paint-order="stroke">B</text></g><path d="M19.0 79.7v2.5" stroke="#b03030" stroke-width="1"/><g transform="translate(38.93 78.70) scale(1.944 1)"><text x="0" y="0" text-anchor="middle" font-family="Liberation Sans" font-weight="bold" font-size="36.38" fill="url(#gold)" stroke="#7a6814" stroke-width="1.03" stroke-linejoin="round" paint-order="stroke">I</text></g><path d="M38.6 79.7v2.5" stroke="#b03030" stroke-width="1"/><g transform="translate(59.75 78.70) scale(0.720 1)"><text x="0" y="0" text-anchor="middle" font-family="Liberation Sans" font-weight="bold" font-size="36.38" fill="url(#gold)" stroke="#7a6814" stroke-width="2.78" stroke-linejoin="round" paint-order="stroke">R</text></g><path d="M60.2 79.7v2.5" stroke="#b03030" stroke-width="1"/><g transform="translate(86.54 78.70) scale(0.964 1)"><text x="0" y="0" text-anchor="middle" font-family="Liberation Sans" font-weight="bold" font-size="36.38" fill="url(#gold)" stroke="#7a6814" stroke-width="2.07" stroke-linejoin="round" paint-order="stroke">T</text></g><path d="M86.4 79.7v2.5" stroke="#b03030" stroke-width="1"/><g transform="translate(115.08 78.70) scale(0.844 1)"><text x="0" y="0" text-anchor="middle" font-family="Liberation Sans" font-weight="bold" font-size="36.38" fill="url(#gold)" stroke="#7a6814" stroke-width="2.37" stroke-linejoin="round" paint-order="stroke">H</text></g><path d="M114.9 79.7v2.5" stroke="#b03030" stroke-width="1"/><g transform="translate(144.96 78.70) scale(0.879 1)"><text x="0" y="0" text-anchor="middle" font-family="Liberation Sans" font-weight="bold" font-size="36.38" fill="url(#gold)" stroke="#7a6814" stroke-width="2.28" stroke-linejoin="round" paint-order="stroke">D</text></g><path d="M145.2 79.7v2.5" stroke="#b03030" stroke-width="1"/><g transform="translate(173.17 78.70) scale(0.775 1)"><text x="0" y="0" text-anchor="middle" font-family="Liberation Sans" font-weight="bold" font-size="36.38" fill="url(#gold)" stroke="#7a6814" stroke-width="2.58" stroke-linejoin="round" paint-order="stroke">A</text></g><path d="M173.0 79.7v2.5" stroke="#b03030" stroke-width="1"/><g transform="translate(197.52 78.70) scale(0.951 1)"><text x="0" y="0" text-anchor="middle" font-family="Liberation Sans" font-weight="bold" font-size="36.38" fill="url(#gold)" stroke="#7a6814" stroke-width="2.10" stroke-linejoin="round" paint-order="stroke">Y</text></g><path d="M197.4 79.7v2.5" stroke="#b03030" stroke-width="1"/><g transform="translate(36.10 114.50) scale(0.899 1)"><text x="0" y="0" text-anchor="middle" font-family="Liberation Sans" font-weight="bold" font-size="37.97" fill="url(#gold)" stroke="#7a6814" stroke-width="2.22" stroke-linejoin="round" paint-order="stroke">N</text></g><path d="M35.9 115.5v2.5" stroke="#b03030" stroke-width="1"/><g transform="translate(60.96 114.50) scale(0.702 1)"><text x="0" y="0" text-anchor="middle" font-family="Liberation Sans" font-weight="bold" font-size="37.97" fill="url(#gold)" stroke="#7a6814" stroke-width="2.85" stroke-linejoin="round" paint-order="stroke">A</text></g><path d="M60.8 115.5v2.5" stroke="#b03030" stroke-width="1"/><g transform="translate(86.00 114.50) scale(0.973 1)"><text x="0" y="0" text-anchor="middle" font-family="Liberation Sans" font-weight="bold" font-size="37.97" fill="url(#gold)" stroke="#7a6814" stroke-width="2.06" stroke-linejoin="round" paint-order="stroke">T</text></g><path d="M85.8 115.5v2.5" stroke="#b03030" stroke-width="1"/><g transform="translate(112.49 114.50) scale(0.845 1)"><text x="0" y="0" text-anchor="middle" font-family="Liberation Sans" font-weight="bold" font-size="37.97" fill="url(#gold)" stroke="#7a6814" stroke-width="2.37" stroke-linejoin="round" paint-order="stroke">H</text></g><path d="M112.3 115.5v2.5" stroke="#b03030" stroke-width="1"/><g transform="translate(139.52 114.50) scale(0.746 1)"><text x="0" y="0" text-anchor="middle" font-family="Liberation Sans" font-weight="bold" font-size="37.97" fill="url(#gold)" stroke="#7a6814" stroke-width="2.68" stroke-linejoin="round" paint-order="stroke">A</text></g><path d="M139.4 115.5v2.5" stroke="#b03030" stroke-width="1"/><g transform="translate(166.10 114.50) scale(0.899 1)"><text x="0" y="0" text-anchor="middle" font-family="Liberation Sans" font-weight="bold" font-size="37.97" fill="url(#gold)" stroke="#7a6814" stroke-width="2.22" stroke-linejoin="round" paint-order="stroke">N</text></g><path d="M165.9 115.5v2.5" stroke="#b03030" stroke-width="1"/></svg>
</div>
<div class="a" style="left:332.90px;top:162.30px;width:206.30px;height:30.00px;background:#e5e5f1;border-radius:1px"></div>
<div class="t" style="left:340.50px;top:168.66px;font-size:6.3px;color:#616161;font-weight:normal;">10:04 AM</div>
<div class="t" style="left:340.50px;top:178.98px;font-size:7.6px;color:#252424;font-weight:normal;">Yes!! That looks fantastic! I can’t wait to see his reaction!</div>
<div class="a" style="left:314.50px;top:194.20px;width:224.70px;height:17.10px;background:#e5e5f1;border-radius:1px"></div>
<div class="t" style="left:321.50px;top:198.41px;font-size:7.76px;color:#252424;font-weight:normal;">Is there anything else that I can do to help you set things up?</div>
<div class="a" style="left:469.80px;top:213.50px;width:69.40px;height:17.30px;background:#e5e5f1;border-radius:1px"></div>
<div class="t" style="left:476.50px;top:217.82px;font-size:7.5px;color:#252424;font-weight:normal;">Keep me posted.</div>
<div class="av" style="left:23.20px;top:239.50px;width:17.80px;height:17.80px;background:radial-gradient(ellipse 25% 30% at 50% 46%,#c89880 0,#c89880 82%,transparent 100%),radial-gradient(ellipse 33% 30% at 50% 34%,#2a2420 0,#2a2420 85%,transparent 100%),radial-gradient(ellipse 48% 30% at 50% 100%,#e8e8e8 0,#e8e8e8 88%,transparent 100%),#d8d8d8"></div>
<div class="a" style="left:45.70px;top:239.70px;width:138.80px;height:29.00px;background:#fff;border-radius:1px"></div>
<div class="t" style="left:52.20px;top:245.44px;font-size:6.8px;color:#616161;font-weight:normal;">Markus Long</div>
<div class="t" style="left:96.80px;top:245.62px;font-size:6.4px;color:#a19f9d;font-weight:normal;">10:07 AM</div>
<div class="t" style="left:52.20px;top:256.64px;font-size:7.7px;color:#252424;font-weight:normal;">I love it! That’s so many balloons!</div>
<div class="a" style="left:167.80px;top:255.30px;width:9.00px;height:9.00px;border-radius:50%;background:radial-gradient(circle at 50% 40%,#ffd54a 0,#f8b52a 70%,#e8981a 100%)"></div>
<svg style="left:167.80px;top:255.30px" width="9" height="9" viewBox="0 0 9 9"><circle cx="3" cy="3.6" r=".8" fill="#6a3a10"/><circle cx="6" cy="3.6" r=".8" fill="#6a3a10"/><path d="M2.2 5.4c.6 1.6 4 1.6 4.6 0Z" fill="#8a3a10"/></svg>
<div class="a" style="left:45.70px;top:269.30px;width:179.40px;height:18.70px;background:#fff;border-radius:1px"></div>
<div class="t" style="left:52.20px;top:275.61px;font-size:7.75px;color:#252424;font-weight:normal;">Wish we could all be there in person to celebrate.</div>
<div class="a" style="left:45.70px;top:288.60px;width:171.20px;height:17.60px;background:#fff;border-radius:1px"></div>
<div class="t" style="left:52.20px;top:294.39px;font-size:7.8px;color:#252424;font-weight:normal;">Let’s get on a call to run through the checklist!</div>
</div>
<div class="a" style="left:349.50px;top:464.50px;width:583.50px;height:52.50px;background:#f0efee"></div>
<div class="a" style="left:367.50px;top:464.50px;width:548.00px;height:1.00px;background:#e6e5e4"></div>
<div class="a" style="left:395.00px;top:471.80px;width:494.00px;height:23.00px;background:#fff;border-radius:2px"></div>
<div class="t" style="left:404.00px;top:481.11px;font-size:7.1px;color:#616161;font-weight:normal;">Type a new message</div>
<svg style="left:402.50px;top:499.10px" width="10" height="10" viewBox="0 0 10 10"><path d="M.8 8.5 3.5 1h.8l2.7 7.5M1.9 5.8h4" fill="none" stroke="#4a4948" stroke-width=".95"/><path d="M6.2 9c.8-1.8 1.6-2.6 3-3" fill="none" stroke="#4a4948" stroke-width=".9"/></svg>
<svg style="left:421.00px;top:499.10px" width="10" height="10" viewBox="0 0 10 10"><path d="M6.8 2.5 3 6.6a1 1 0 0 0 1.4 1.4l4-4.3a2 2 0 0 0-2.8-2.8L1.5 5.4a3 3 0 0 0 4.2 4.2" fill="none" stroke="#4a4948" stroke-width=".95" transform="rotate(15 5 5)"/></svg>
<svg style="left:438.50px;top:499.10px" width="10" height="10" viewBox="0 0 10 10"><circle cx="5" cy="5" r="4.3" fill="none" stroke="#4a4948" stroke-width=".95"/><circle cx="3.5" cy="4" r=".55" fill="#4a4948"/><circle cx="6.5" cy="4" r=".55" fill="#4a4948"/><path d="M3 6a2.3 2.3 0 0 0 4 0" fill="none" stroke="#4a4948" stroke-width=".95"/></svg>
<svg style="left:456.20px;top:499.10px" width="10" height="10" viewBox="0 0 10 10"><rect x=".8" y=".8" width="8.4" height="8.4" rx="1" fill="none" stroke="#4a4948" stroke-width=".95"/><path d="M2.5 6.8V3.4M4.3 3.4v3.4M6 6.8V3.4h1.6M6 5h1.2" fill="none" stroke="#4a4948" stroke-width=".6"/></svg>
<svg style="left:870.50px;top:499.60px" width="11" height="9" viewBox="0 0 11 9"><path d="M.8.8 10.2 4.5.8 8.2 2.2 4.5Z" fill="none" stroke="#4a4948" stroke-width=".95"/><path d="M2.2 4.5h4" stroke="#4a4948" stroke-width=".95"/></svg>
<div class="a" style="left:135.50px;top:95.00px;width:1.00px;height:423.00px;background:#fafafa"></div>
<div class="a" style="left:932.50px;top:95.00px;width:1.00px;height:423.00px;background:#fafafa"></div>
<div class="a" style="left:135.50px;top:517.00px;width:798.00px;height:1.00px;background:#fafafa"></div>
<div class="a" style="left:0.00px;top:568.40px;width:1066.00px;height:31.60px;background:#d9e3ed"></div>
<div class="a" style="left:0.00px;top:568.40px;width:1066.00px;height:0.80px;background:#e4ecf4"></div>
<div class="a" style="left:38.00px;top:568.40px;width:249.00px;height:31.60px;background:#f5f7f9"></div>
<svg style="left:11.80px;top:577.60px" width="13" height="13" viewBox="0 0 13 13"><path d="M0 1.8 5.3 1.1v5H0ZM6 1 13 0v6.1H6ZM0 6.8h5.3v5.1L0 11.2ZM6 6.8h7V13l-7-1Z" fill="#1a1a1a"/></svg>
<svg style="left:48.00px;top:578.50px" width="11" height="11" viewBox="0 0 11 11"><circle cx="6.7" cy="4.3" r="3.4" fill="none" stroke="#333" stroke-width="1.1"/><path d="M4.3 6.7.8 10.2" stroke="#333" stroke-width="1.3"/></svg>
<div class="t" style="left:69.00px;top:579.19px;font-size:11.36px;color:#484848;font-weight:normal;">Type here to search</div>
<svg style="left:298.50px;top:577.50px" width="14" height="13" viewBox="0 0 14 13"><path d="M.5 2.2h9.5M.5 10.8h9.5" stroke="#1e1e1e" stroke-width="1.4"/><path d="M1.2 1.5v10M9.3 1.5v10" stroke="#1e1e1e" stroke-width="1.2"/><path d="M12.6 1v11" stroke="#1e1e1e" stroke-width="1"/><path d="M11.4 5.2h2.4M11.4 7.8h2.4" stroke="#1e1e1e" stroke-width=".9"/></svg>
<svg style="left:334.50px;top:575.50px" width="17" height="17" viewBox="0 0 17 17"><defs><linearGradient id="eg" x1="0" y1="1" x2="1" y2="0"><stop offset="0" stop-color="#0c59a8"/><stop offset=".5" stop-color="#1b8fdc"/><stop offset="1" stop-color="#3cc8a0"/></linearGradient></defs><circle cx="8.5" cy="8.5" r="8" fill="url(#eg)"/><path d="M16.2 6.5C15.2 3 12 .5 8.5.5 6 .5 3.6 1.8 2.2 3.8 4 2.6 6.5 2.4 8.8 3.2c3 1 4.6 3.6 4.6 5.8H16.5Z" fill="#58d060"/><ellipse cx="9.3" cy="9.6" rx="3" ry="2.5" fill="#dae3ed"/></svg>
<svg style="left:372.00px;top:576.00px" width="17" height="15" viewBox="0 0 17 15"><path d="M.5 2.5h5.5l1.5 1.5H16.5v10.5H.5Z" fill="#f6c33c"/><path d="M.5 5.5h16v9H.5Z" fill="#fbd85a"/><rect x="5" y="9" width="7" height="5.5" fill="#1f7ad0"/><rect x="6.5" y="10.5" width="4" height="4" fill="#fbd85a"/></svg>
<svg style="left:408.80px;top:576.50px" width="18" height="15" viewBox="0 0 18 15"><path d="M.5 5.5 9 .5l8.5 5v9H.5Z" fill="#1a7fd6"/><path d="M2.5 5.5h13v4L9 12 2.5 9.5Z" fill="#fff"/><path d="M.5 7 9 11.5 17.5 7v7.5H.5Z" fill="#3ea0ec"/></svg>
<svg style="left:447.50px;top:575.50px" width="16" height="17" viewBox="0 0 16 17"><path d="M4.8 4V2.6a3.2 3.2 0 0 1 6.4 0V4" fill="none" stroke="#222" stroke-width="1.2"/><rect x=".5" y="4" width="15" height="12.5" rx="1" fill="#2a2a2a"/><rect x="5" y="7.5" width="2.7" height="2.7" fill="#f25022"/><rect x="8.3" y="7.5" width="2.7" height="2.7" fill="#7fba00"/><rect x="5" y="10.8" width="2.7" height="2.7" fill="#00a4ef"/><rect x="8.3" y="10.8" width="2.7" height="2.7" fill="#ffb900"/></svg>
<svg style="left:484.50px;top:576.00px" width="18" height="16" viewBox="0 0 18 16"><circle cx="13.5" cy="3.5" r="2.3" fill="#7b83eb"/><path d="M10.5 6.5h6a1 1 0 0 1 1 1v4.5a3.5 3.5 0 0 1-7 0Z" fill="#7b83eb"/><circle cx="8.8" cy="2.8" r="2.6" fill="#5059c9"/><path d="M4.5 6h9v6.5a4.5 4.5 0 0 1-9 0Z" fill="#5059c9"/><rect x=".5" y="4" width="9" height="9" rx="1" fill="#4b53bc"/><path d="M2.5 6.3h5M5 6.3v5" stroke="#fff" stroke-width="1.3"/><circle cx="15" cy="13.5" r="2.3" fill="#6bb700" stroke="#dae3ed" stroke-width=".8"/></svg>
<div class="a" style="left:477.50px;top:598.00px;width:31.00px;height:2.00px;background:#2a68c4"></div>
<div class="a" style="left:511.70px;top:568.40px;width:37.50px;height:31.60px;background:#e8eef5"></div>
<svg style="left:522.80px;top:578.50px" width="14" height="12" viewBox="0 0 14 12"><circle cx="10.5" cy="2.8" r="1.8" fill="#7b83eb"/><path d="M8.2 5h4.8a.8.8 0 0 1 .8.8v3.4a2.8 2.8 0 0 1-5.6 0Z" fill="#7b83eb"/><circle cx="6.9" cy="2.2" r="2" fill="#5059c9"/><path d="M3.5 4.6h7v5a3.5 3.5 0 0 1-7 0Z" fill="#5059c9"/><rect x=".4" y="3.2" width="7" height="7" rx=".8" fill="#4b53bc"/><path d="M1.9 5h4M3.9 5v4" stroke="#fff" stroke-width="1"/></svg>
<div class="a" style="left:511.70px;top:598.00px;width:37.50px;height:2.00px;background:#2a68c4"></div>
<svg style="left:861.50px;top:582.00px" width="10" height="6" viewBox="0 0 10 6"><path d="M.8 5.2 5 1l4.2 4.2" fill="none" stroke="#1e1e1e" stroke-width="1"/></svg>
<div class="a" style="left:883.50px;top:581.20px;width:14.20px;height:6.80px;background:#111"></div>
<svg style="left:911.50px;top:580.00px" width="11" height="10" viewBox="0 0 11 10"><path d="M1 9.5a8.5 8.5 0 0 1 9-8.5M2.8 9.5A6.5 6.5 0 0 1 10 3M4.6 9.5A4.5 4.5 0 0 1 10 5M6.4 9.5a2.5 2.5 0 0 1 3.6-2.5" fill="none" stroke="#6a6a6a" stroke-width=".8"/></svg>
<svg style="left:934.00px;top:578.50px" width="14" height="13" viewBox="0 0 14 13"><path d="M.8 4.5h2.6L7 1.2v10.6L3.4 8.5H.8Z" fill="none" stroke="#1e1e1e" stroke-width=".9"/><path d="M9 4.2a2.8 2.8 0 0 1 0 4.6M10.8 2.6a5 5 0 0 1 0 7.8" fill="none" stroke="#1e1e1e" stroke-width=".9"/></svg>
<svg style="left:959.50px;top:577.50px" width="14" height="14" viewBox="0 0 14 14"><path d="M1.5 12.5c1.5-.2 2.5-1.2 3-2.5L9.8 2.5l1.7 1.7L6 9c-1 .6-1.5 1.5-1.5 2.5M8.5 2c1-1 2-1.2 3-.3s.8 2-.2 3M2.5 10.5l-1.5 2.5" fill="none" stroke="#1e1e1e" stroke-width="1.1"/></svg>
<div class="t" style="right:62.80px;top:574.86px;font-size:9.2px;color:#1e1e1e;font-weight:normal;transform:translateX(50%)">10:10 AM</div>
<div class="t" style="right:62.80px;top:586.73px;font-size:9.5px;color:#1e1e1e;font-weight:normal;transform:translateX(50%)">10/1/2020</div>
<svg style="left:1036.50px;top:577.00px" width="16" height="14" viewBox="0 0 16 14"><path d="M.8.8h14.4v10H9.2L6.8 13V10.8H.8Z" fill="none" stroke="#1e1e1e" stroke-width="1"/></svg>
<div class="a" style="left:1063.00px;top:568.40px;width:1.00px;height:31.60px;background:#b8c0c8"></div>
</body></html>
